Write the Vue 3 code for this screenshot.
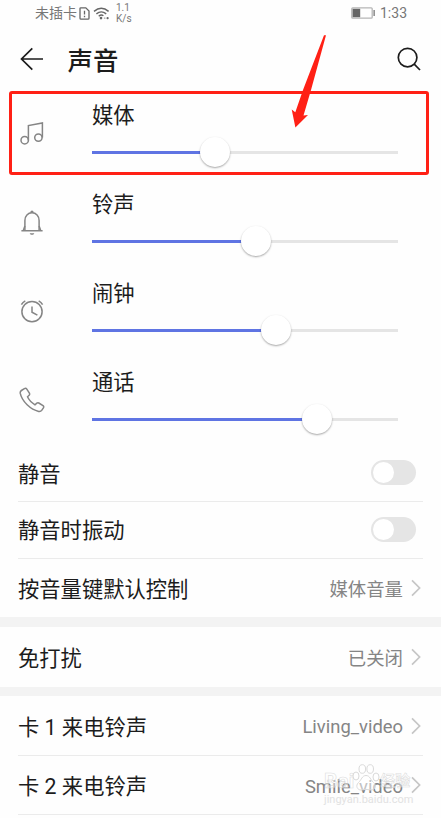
<template>
  <div class="phone">
    <div class="status">
      <div class="status-left">
        <span>未插卡</span>
        <svg class="sim" width="11" height="13" viewBox="0 0 11 13">
          <path d="M1 1.6Q1 .8 1.8 .8H6.8L10 4V11.2Q10 12.2 9 12.2H2Q1 12.2 1 11.2Z" />
          <path d="M5.5 3.8V7.6M5.5 8.8V10.2" />
        </svg>
        <svg class="wifi" width="17" height="13" viewBox="0 0 17 13">
          <path d="M1 4.4Q8.3 -2 15.6 4.4M3.4 6.9Q8.3 2.8 13.2 6.9M5.7 9.2Q8.3 7.2 10.4 8.8" />
          <circle cx="8" cy="11.1" r="1.3" />
          <circle class="faint" cx="11.7" cy="11.2" r=".9" />
          <circle cx="14.6" cy="11.2" r="1.1" />
        </svg>
        <div class="speed"><span>1.1</span><span>K/s</span></div>
      </div>
      <div class="status-right">
        <svg width="25" height="12" viewBox="0 0 25 12">
          <rect class="case" x=".8" y=".8" width="20.4" height="10.4" rx="1" />
          <rect class="charge" x="1.6" y="1.8" width="7.6" height="8.4" />
          <rect class="pole" x="22.4" y="3" width="1.5" height="6" />
        </svg>
        <span>1:33</span>
      </div>
    </div>

    <header class="header">
      <svg class="back" width="24" height="24" viewBox="0 0 24 24">
        <path d="M23 12H1.5M12.3 1.3L1.5 12L12.3 22.7" />
      </svg>
      <h1>声音</h1>
      <svg class="search" width="24" height="24" viewBox="0 0 24 24">
        <circle cx="10.6" cy="10.6" r="9.3" />
        <path d="M17.2 17.2L23 23" />
      </svg>
    </header>

    <section class="volumes">
      <div v-for="item in volumes" :key="item.name" class="volume">
        <svg class="volume-icon" width="26" height="26" viewBox="0 0 26 26">
          <g v-if="item.name === 'media'">
            <circle cx="5.7" cy="20.2" r="3.7" />
            <circle cx="19.4" cy="17.6" r="3.7" />
            <path d="M9.4 20.2V5.6L23.4 2.9V17.6" />
          </g>
          <g v-else-if="item.name === 'ring'">
            <path d="M2.4 21.7H23.6M5.9 21.4V11.4C5.9 7 8.9 3.8 13 3.8S20.1 7 20.1 11.4V21.4" />
            <path class="solid" d="M11.2 3.7C11.6 .8 14.4 .8 14.8 3.7ZM10.7 24.2H15.3C14.7 26.2 11.3 26.2 10.7 24.2Z" />
            <path d="M5.9 17L4.3 21.5M20.1 17L21.7 21.5" />
          </g>
          <g v-else-if="item.name === 'alarm'">
            <circle cx="13" cy="13.7" r="10.1" />
            <path d="M13 8.4V14.2L18.4 17.1M2.4 6.7Q3.8 4.1 6.3 2.9M19.7 2.9Q22.2 4.1 23.6 6.7" />
          </g>
          <g v-else>
            <path d="M2.4 3.5L5.4 1.6Q6.9 .8 7.8 2.1L10.4 6.1Q11 7.2 10.1 8.2L8.5 9.8C10 13.1 12.6 15.8 16 17.8L17.8 16.2Q18.7 15.5 19.8 16L24 18.6Q25.2 19.5 24.4 20.8L22.7 23.4Q21.7 24.7 19.7 24.4C11.7 22.7 3 14.6 1.2 6.2Q1 4.4 2.4 3.5Z" />
          </g>
        </svg>
        <div class="volume-body">
          <div class="volume-label">{{ item.label }}</div>
          <div class="track">
            <div class="fill" :style="{ width: item.value + '%' }"></div>
            <div class="thumb" :style="{ left: item.value + '%' }"></div>
          </div>
        </div>
      </div>
    </section>

    <section v-for="(group, index) in groups" :key="index" class="group">
      <div v-for="row in group" :key="row.label" class="row" :class="{ short: row.toggle }">
        <span class="row-label">{{ row.label }}</span>
        <div v-if="row.toggle" class="toggle"><div class="knob"></div></div>
        <template v-else>
          <span class="row-value">{{ row.value }}</span>
          <svg class="chevron" width="10" height="18" viewBox="0 0 10 18">
            <path d="M1 1.4L8.6 9L1 16.6" />
          </svg>
        </template>
      </div>
    </section>

    <div class="watermark">
      <div class="brand">
        <span>Bai</span>
        <svg width="28" height="27" viewBox="0 0 28 27">
          <ellipse cx="4" cy="12" rx="3" ry="4" />
          <ellipse cx="10.3" cy="5" rx="3.3" ry="4.3" />
          <ellipse cx="18.2" cy="5" rx="3.3" ry="4.3" />
          <ellipse cx="24" cy="13" rx="3" ry="4" />
          <path d="M14 11.5C10 11.5 9.5 16 6.5 18.5C3 22 5.5 26 9 26Q14 24.8 19 26C23 26 25 21.5 21.5 18.5C18.5 16 18 11.5 14 11.5Z" />
        </svg>
        <span class="brand-cn">经验</span>
      </div>
      <div class="site">jingyan.baidu.com</div>
    </div>

    <div class="highlight"></div>
    <svg class="arrow" width="40" height="96" viewBox="0 0 40 96">
      <path d="M35 1.3L37 1.3L22 56L14.5 81.5L19 81L6.4 93.5L2.7 75.5L6.3 78.2L14 56Z" />
    </svg>
  </div>
</template>

<script setup>
import { ref } from "vue"

const volumes = ref([
  { name: "media", label: "媒体", value: 40.2 },
  { name: "ring", label: "铃声", value: 53.5 },
  { name: "alarm", label: "闹钟", value: 60.1 },
  { name: "call", label: "通话", value: 73.5 },
])

const groups = [
  [
    { label: "静音", toggle: true },
    { label: "静音时振动", toggle: true },
    { label: "按音量键默认控制", value: "媒体音量" },
  ],
  [{ label: "免打扰", value: "已关闭" }],
  [
    { label: "卡 1 来电铃声", value: "Living_video" },
    { label: "卡 2 来电铃声", value: "Smile_video" },
  ],
]
</script>

<style>
body {
  margin: 0;
  background: #fefefe;
}
</style>

<style scoped>
.phone {
  position: relative;
  box-sizing: border-box;
  width: 441px;
  height: 818px;
  overflow: hidden;
  background: #fefefe;
  color: #1c1c1c;
  font-family: Roboto, "Noto Sans CJK SC", sans-serif;
}

svg {
  display: block;
  flex: none;
  fill: none;
}

.status {
  display: flex;
  justify-content: space-between;
  box-sizing: border-box;
  height: 27px;
  padding: 0 34px 1px 35px;
  color: #777;
  font-size: 14px;
  line-height: 26px;
}

.status-left,
.status-right {
  display: flex;
  align-items: center;
}

.sim {
  margin-left: 2px;
  stroke: #666;
  stroke-width: 1.3;
}

.wifi {
  margin-left: 3px;
  stroke: #666;
  stroke-width: 1.4;
}

.wifi circle {
  fill: #666;
  stroke: none;
}

.wifi .faint {
  fill: #bbb;
}

.speed {
  display: flex;
  flex-direction: column;
  margin-left: 6px;
  font-size: 10px;
  line-height: 11px;
}

.status-right {
  gap: 4px;
}

.case {
  stroke: #b5b5b5;
  stroke-width: 1.3;
}

.charge {
  fill: #666;
}

.pole {
  fill: #888;
}

.header {
  display: flex;
  align-items: center;
  height: 63px;
  padding: 0 20px 0 20px;
}

.back,
.search {
  stroke: #1c1c1c;
  stroke-width: 1.7;
}

h1 {
  flex: 1;
  margin: 0 0 0 23.5px;
  padding-top: 4px;
  font-size: 25.4px;
  font-weight: 500;
  line-height: 36px;
}

.volume {
  display: flex;
  height: 89px;
  padding: 0 43px 0 19px;
}

.volume-icon {
  margin: 29.5px 47px 0 0;
  stroke: #858585;
  stroke-width: 1.5;
}

.solid {
  fill: #858585;
  stroke: none;
}

.volume-body {
  flex: 1;
}

.volume-label {
  padding-top: 10px;
  font-size: 21.3px;
  line-height: 32px;
}

.track {
  position: relative;
  height: 3px;
  margin-top: 19px;
  background: #e5e5e5;
}

.fill {
  height: 100%;
  background: #5f74e3;
}

.thumb {
  position: absolute;
  top: -14px;
  width: 30px;
  height: 30px;
  margin-left: -15px;
  border-radius: 50%;
  background: #fff;
  box-shadow: 0 1px 2px rgba(0, 0, 0, 0.35);
}

.group + .group {
  border-top: 10px solid #f3f3f3;
}

.group + .group + .group {
  border-top-width: 9px;
}

.row {
  display: flex;
  align-items: center;
  box-sizing: border-box;
  height: 59px;
  margin: 0 18px;
  padding: 0 2px 0 0;
}

.row.short {
  height: 57px;
  padding: 0 7px 2px 0;
}

.row.short:first-child {
  height: 55px;
}

.row:only-child {
  height: 60px;
}

.row + .row {
  border-top: 1px solid #ebebeb;
}

.group:nth-last-of-type(1) .row:last-child {
  height: 60px;
  border-bottom: 1px solid #ebebeb;
}

.row-label {
  flex: 1;
  padding-top: 4px;
  font-size: 21.3px;
  line-height: 32px;
}

.row-value {
  padding-top: 3px;
  color: #858585;
  font-size: 18.4px;
  line-height: 28px;
}

.chevron {
  margin-left: 8px;
  stroke: #c6c6c6;
  stroke-width: 1.7;
}

.toggle {
  box-sizing: border-box;
  width: 45px;
  height: 25px;
  padding: 2px;
  border-radius: 13px;
  background: #e5e5e5;
}

.knob {
  width: 21px;
  height: 21px;
  border-radius: 50%;
  background: #fff;
}

.watermark {
  position: absolute;
  top: 764px;
  left: 324px;
  width: 91px;
}

.brand {
  display: flex;
  align-items: flex-end;
  height: 28px;
  color: rgba(255, 255, 255, 0.45);
  font-size: 21px;
  font-weight: 700;
  line-height: 22px;
  -webkit-text-stroke: 0.6px rgba(205, 205, 205, 0.7);
}

.brand svg {
  margin: 0 0 1px -2px;
  fill: rgba(255, 255, 255, 0.5);
  stroke: #dadada;
  stroke-width: 1;
}

.brand-cn {
  font-size: 15px;
}

.site {
  color: #e2e2e2;
  font-size: 11px;
  line-height: 15px;
}

.highlight {
  position: absolute;
  top: 91px;
  left: 9px;
  box-sizing: border-box;
  width: 420px;
  height: 84px;
  border: 3px solid #ff2015;
  border-radius: 3px;
}

.arrow {
  position: absolute;
  top: 34px;
  left: 289px;
  fill: #ff2015;
}
</style>
